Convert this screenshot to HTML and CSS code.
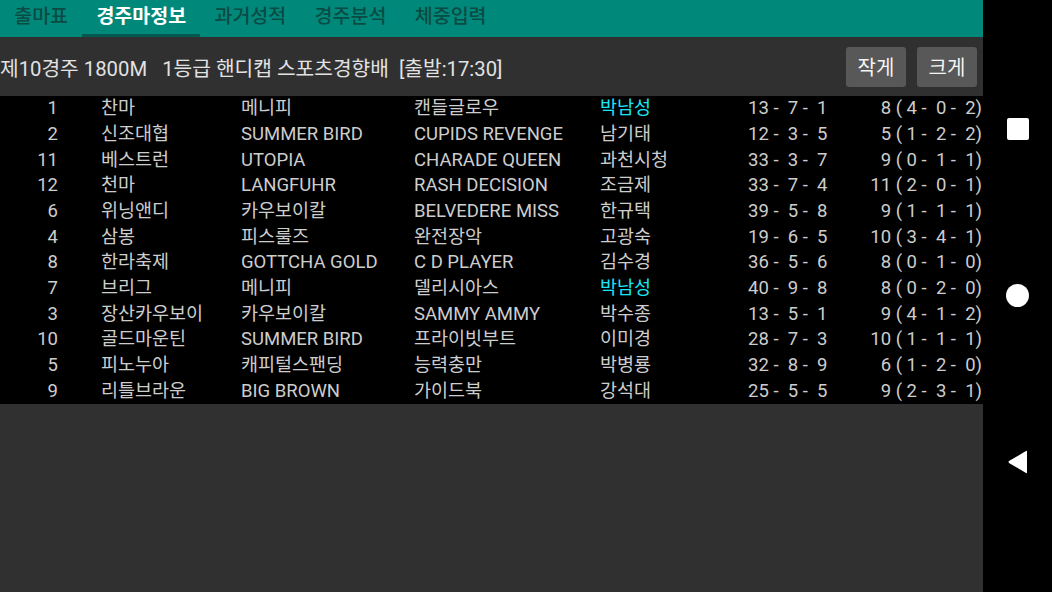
FILE: index.html
```html
<!DOCTYPE html>
<html lang="ko">
<head>
  <meta charset="UTF-8" />
  <title>경주마정보</title>
  <link rel="stylesheet" href="styles.css">
</head>
<body>
  <div class="app">
    <div class="tabs">
      <div class="tab">출마표</div>
      <div class="tab active">경주마정보</div>
      <div class="tab">과거성적</div>
      <div class="tab">경주분석</div>
      <div class="tab">체중입력</div>
    </div>
    <div class="info-bar">
      <div class="race-title">제10경주 1800M   1등급 핸디캡 스포츠경향배  [출발:17:30]</div>
      <div class="btn-group">
        <button class="size-btn">작게</button>
        <button class="size-btn">크게</button>
      </div>
    </div>
    <div class="horse-table">
      <div class="row"><span class="num">1</span><span>찬마</span><span>메니피</span><span>캔들글로우</span><span class="hl">박남성</span><span class="rec">13 -  7 -  1</span><span class="rec2"> 8 ( 4 -  0 -  2)</span></div>
      <div class="row"><span class="num">2</span><span>신조대협</span><span>SUMMER BIRD</span><span>CUPIDS REVENGE</span><span>남기태</span><span class="rec">12 -  3 -  5</span><span class="rec2"> 5 ( 1 -  2 -  2)</span></div>
      <div class="row"><span class="num">11</span><span>베스트런</span><span>UTOPIA</span><span>CHARADE QUEEN</span><span>과천시청</span><span class="rec">33 -  3 -  7</span><span class="rec2"> 9 ( 0 -  1 -  1)</span></div>
      <div class="row"><span class="num">12</span><span>천마</span><span>LANGFUHR</span><span>RASH DECISION</span><span>조금제</span><span class="rec">33 -  7 -  4</span><span class="rec2">11 ( 2 -  0 -  1)</span></div>
      <div class="row"><span class="num">6</span><span>위닝앤디</span><span>카우보이칼</span><span>BELVEDERE MISS</span><span>한규택</span><span class="rec">39 -  5 -  8</span><span class="rec2"> 9 ( 1 -  1 -  1)</span></div>
      <div class="row"><span class="num">4</span><span>삼봉</span><span>피스룰즈</span><span>완전장악</span><span>고광숙</span><span class="rec">19 -  6 -  5</span><span class="rec2">10 ( 3 -  4 -  1)</span></div>
      <div class="row"><span class="num">8</span><span>한라축제</span><span>GOTTCHA GOLD</span><span>C D PLAYER</span><span>김수경</span><span class="rec">36 -  5 -  6</span><span class="rec2"> 8 ( 0 -  1 -  0)</span></div>
      <div class="row"><span class="num">7</span><span>브리그</span><span>메니피</span><span>델리시아스</span><span class="hl">박남성</span><span class="rec">40 -  9 -  8</span><span class="rec2"> 8 ( 0 -  2 -  0)</span></div>
      <div class="row"><span class="num">3</span><span>장산카우보이</span><span>카우보이칼</span><span>SAMMY AMMY</span><span>박수종</span><span class="rec">13 -  5 -  1</span><span class="rec2"> 9 ( 4 -  1 -  2)</span></div>
      <div class="row"><span class="num">10</span><span>골드마운틴</span><span>SUMMER BIRD</span><span>프라이빗부트</span><span>이미경</span><span class="rec">28 -  7 -  3</span><span class="rec2">10 ( 1 -  1 -  1)</span></div>
      <div class="row"><span class="num">5</span><span>피노누아</span><span>캐피털스팬딩</span><span>능력충만</span><span>박병룡</span><span class="rec">32 -  8 -  9</span><span class="rec2"> 6 ( 1 -  2 -  0)</span></div>
      <div class="row"><span class="num">9</span><span>리틀브라운</span><span>BIG BROWN</span><span>가이드북</span><span>강석대</span><span class="rec">25 -  5 -  5</span><span class="rec2"> 9 ( 2 -  3 -  1)</span></div>
    </div>
    <div class="filler"></div>
  </div>
  <div class="nav-bar">
    <div class="nav-square"></div>
    <div class="nav-circle"></div>
    <svg class="nav-back" width="22" height="24" viewBox="0 0 22 24">
      <path d="M20 1.5 L20 22.5 Q20 23.5 19 23 L2 13 Q1 12 2 11 L19 1 Q20 0.5 20 1.5 Z" fill="#fff"/>
    </svg>
  </div>
</body>
</html>
```

FILE: styles.css
```css
* {
  margin: 0;
  padding: 0;
  box-sizing: border-box;
}
html, body {
  width: 100%;
  height: 100%;
}
body {
  display: flex;
  background-color: #000;
  font-family: Roboto, "Noto Sans CJK KR", sans-serif;
  overflow: hidden;
}
.app {
  width: 983px;
  height: 592px;
  display: flex;
  flex-direction: column;
  background-color: #303030;
}
.tabs {
  height: 37px;
  background-color: #00897b;
  display: flex;
  align-items: stretch;
}
.tab {
  padding: 0 14.2px;
  font-size: 19.5px;
  font-weight: 500;
  line-height: 34px;
  color: #0a4b44;
  border-bottom: 3px solid transparent;
}
.tab.active {
  color: #ffffff;
  font-weight: bold;
  border-bottom-color: #03584f;
}
.info-bar {
  height: 59px;
  display: flex;
  align-items: center;
  justify-content: space-between;
  padding: 0 6px 0 0;
}
.race-title {
  white-space: pre;
  font-size: 20.3px;
  color: #e2e2e2;
}
.btn-group {
  display: flex;
  gap: 11px;
}
.size-btn {
  width: 60px;
  height: 40px;
  border: none;
  border-radius: 3px;
  background-color: #585858;
  color: #f4f4f4;
  font-family: Roboto, "Noto Sans CJK KR", sans-serif;
  font-size: 20px;
}
.horse-table {
  background-color: #000;
  display: flex;
  flex-direction: column;
}
.row {
  height: 25.67px;
  display: grid;
  grid-template-columns: 101px 140px 173px 186px 148px 112px 122px;
  align-items: center;
  font-size: 18.5px;
  line-height: 25px;
  color: #cdcdcd;
  white-space: pre;
}
.row .num {
  text-align: right;
  padding-right: 43px;
}
.row .hl {
  color: #19e6f5;
}
.row .rec2 {
  text-align: right;
}
.filler {
  flex: 1;
}
.nav-bar {
  width: 69px;
  height: 592px;
  display: flex;
  flex-direction: column;
  align-items: center;
  justify-content: space-between;
  padding: 118px 0 118px;
}
.nav-square {
  width: 22px;
  height: 22px;
  border-radius: 2px;
  background-color: #fff;
}
.nav-circle {
  width: 23px;
  height: 23px;
  border-radius: 50%;
  background-color: #fff;
}
```
